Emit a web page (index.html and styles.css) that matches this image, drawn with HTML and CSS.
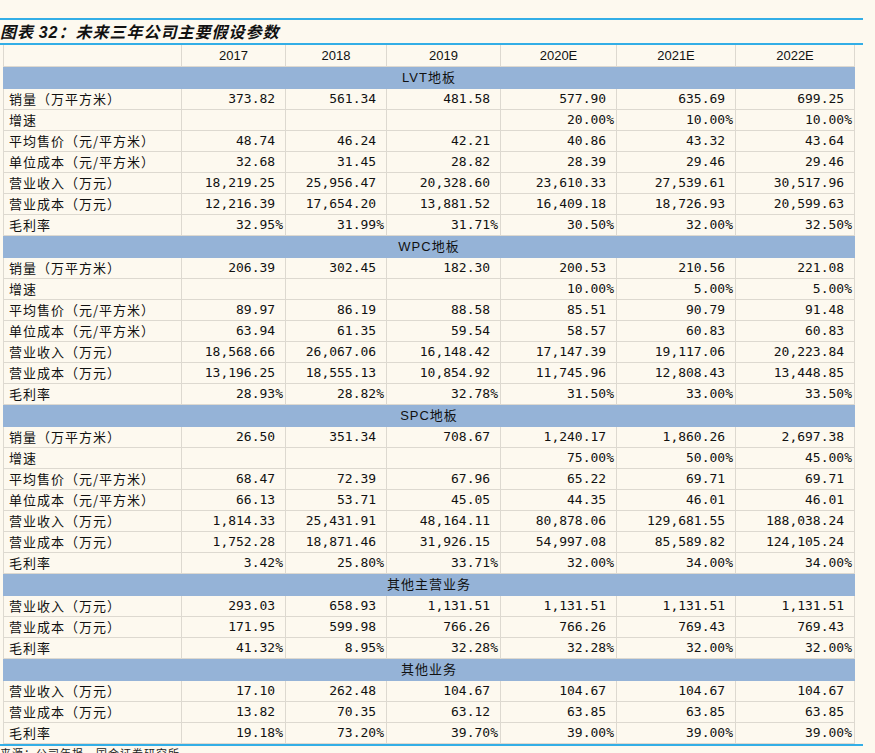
FILE: index.html
```html
<!DOCTYPE html>
<html lang="zh">
<head>
<meta charset="utf-8">
<title>图表 32</title>
<link rel="stylesheet" href="styles.css">
</head>
<body>
<div class="page">
  <div class="title-bar"><span class="title">图表 <span class="num">32</span>：未来三年公司主要假设参数</span></div>
  <table class="data">
    <colgroup>
      <col class="c0"><col class="c1"><col class="c2"><col class="c3"><col class="c4"><col class="c5"><col class="c6">
    </colgroup>
    <tr class="head"><td></td><td>2017</td><td>2018</td><td>2019</td><td>2020E</td><td>2021E</td><td>2022E</td></tr>

    <tr class="sec"><td colspan="7">LVT地板</td></tr>
    <tr><td class="l">销量（万平方米）</td><td class="n">373.82</td><td class="n">561.34</td><td class="n">481.58</td><td class="n">577.90</td><td class="n">635.69</td><td class="n">699.25</td></tr>
    <tr><td class="l">增速</td><td></td><td></td><td></td><td class="p">20.00%</td><td class="p">10.00%</td><td class="p">10.00%</td></tr>
    <tr><td class="l">平均售价（元/平方米）</td><td class="n">48.74</td><td class="n">46.24</td><td class="n">42.21</td><td class="n">40.86</td><td class="n">43.32</td><td class="n">43.64</td></tr>
    <tr><td class="l">单位成本（元/平方米）</td><td class="n">32.68</td><td class="n">31.45</td><td class="n">28.82</td><td class="n">28.39</td><td class="n">29.46</td><td class="n">29.46</td></tr>
    <tr><td class="l">营业收入（万元）</td><td class="n">18,219.25</td><td class="n">25,956.47</td><td class="n">20,328.60</td><td class="n">23,610.33</td><td class="n">27,539.61</td><td class="n">30,517.96</td></tr>
    <tr><td class="l">营业成本（万元）</td><td class="n">12,216.39</td><td class="n">17,654.20</td><td class="n">13,881.52</td><td class="n">16,409.18</td><td class="n">18,726.93</td><td class="n">20,599.63</td></tr>
    <tr><td class="l">毛利率</td><td class="p">32.95%</td><td class="p">31.99%</td><td class="p">31.71%</td><td class="p">30.50%</td><td class="p">32.00%</td><td class="p">32.50%</td></tr>

    <tr class="sec"><td colspan="7">WPC地板</td></tr>
    <tr><td class="l">销量（万平方米）</td><td class="n">206.39</td><td class="n">302.45</td><td class="n">182.30</td><td class="n">200.53</td><td class="n">210.56</td><td class="n">221.08</td></tr>
    <tr><td class="l">增速</td><td></td><td></td><td></td><td class="p">10.00%</td><td class="p">5.00%</td><td class="p">5.00%</td></tr>
    <tr><td class="l">平均售价（元/平方米）</td><td class="n">89.97</td><td class="n">86.19</td><td class="n">88.58</td><td class="n">85.51</td><td class="n">90.79</td><td class="n">91.48</td></tr>
    <tr><td class="l">单位成本（元/平方米）</td><td class="n">63.94</td><td class="n">61.35</td><td class="n">59.54</td><td class="n">58.57</td><td class="n">60.83</td><td class="n">60.83</td></tr>
    <tr><td class="l">营业收入（万元）</td><td class="n">18,568.66</td><td class="n">26,067.06</td><td class="n">16,148.42</td><td class="n">17,147.39</td><td class="n">19,117.06</td><td class="n">20,223.84</td></tr>
    <tr><td class="l">营业成本（万元）</td><td class="n">13,196.25</td><td class="n">18,555.13</td><td class="n">10,854.92</td><td class="n">11,745.96</td><td class="n">12,808.43</td><td class="n">13,448.85</td></tr>
    <tr><td class="l">毛利率</td><td class="p">28.93%</td><td class="p">28.82%</td><td class="p">32.78%</td><td class="p">31.50%</td><td class="p">33.00%</td><td class="p">33.50%</td></tr>

    <tr class="sec"><td colspan="7">SPC地板</td></tr>
    <tr><td class="l">销量（万平方米）</td><td class="n">26.50</td><td class="n">351.34</td><td class="n">708.67</td><td class="n">1,240.17</td><td class="n">1,860.26</td><td class="n">2,697.38</td></tr>
    <tr><td class="l">增速</td><td></td><td></td><td></td><td class="p">75.00%</td><td class="p">50.00%</td><td class="p">45.00%</td></tr>
    <tr><td class="l">平均售价（元/平方米）</td><td class="n">68.47</td><td class="n">72.39</td><td class="n">67.96</td><td class="n">65.22</td><td class="n">69.71</td><td class="n">69.71</td></tr>
    <tr><td class="l">单位成本（元/平方米）</td><td class="n">66.13</td><td class="n">53.71</td><td class="n">45.05</td><td class="n">44.35</td><td class="n">46.01</td><td class="n">46.01</td></tr>
    <tr><td class="l">营业收入（万元）</td><td class="n">1,814.33</td><td class="n">25,431.91</td><td class="n">48,164.11</td><td class="n">80,878.06</td><td class="n">129,681.55</td><td class="n">188,038.24</td></tr>
    <tr><td class="l">营业成本（万元）</td><td class="n">1,752.28</td><td class="n">18,871.46</td><td class="n">31,926.15</td><td class="n">54,997.08</td><td class="n">85,589.82</td><td class="n">124,105.24</td></tr>
    <tr><td class="l">毛利率</td><td class="p">3.42%</td><td class="p">25.80%</td><td class="p">33.71%</td><td class="p">32.00%</td><td class="p">34.00%</td><td class="p">34.00%</td></tr>

    <tr class="sec"><td colspan="7">其他主营业务</td></tr>
    <tr><td class="l">营业收入（万元）</td><td class="n">293.03</td><td class="n">658.93</td><td class="n">1,131.51</td><td class="n">1,131.51</td><td class="n">1,131.51</td><td class="n">1,131.51</td></tr>
    <tr><td class="l">营业成本（万元）</td><td class="n">171.95</td><td class="n">599.98</td><td class="n">766.26</td><td class="n">766.26</td><td class="n">769.43</td><td class="n">769.43</td></tr>
    <tr><td class="l">毛利率</td><td class="p">41.32%</td><td class="p">8.95%</td><td class="p">32.28%</td><td class="p">32.28%</td><td class="p">32.00%</td><td class="p">32.00%</td></tr>

    <tr class="sec"><td colspan="7">其他业务</td></tr>
    <tr><td class="l">营业收入（万元）</td><td class="n">17.10</td><td class="n">262.48</td><td class="n">104.67</td><td class="n">104.67</td><td class="n">104.67</td><td class="n">104.67</td></tr>
    <tr><td class="l">营业成本（万元）</td><td class="n">13.82</td><td class="n">70.35</td><td class="n">63.12</td><td class="n">63.85</td><td class="n">63.85</td><td class="n">63.85</td></tr>
    <tr><td class="l">毛利率</td><td class="p">19.18%</td><td class="p">73.20%</td><td class="p">39.70%</td><td class="p">39.00%</td><td class="p">39.00%</td><td class="p">39.00%</td></tr>
  </table>
  <div class="rule"></div>
  <div class="source">来源：公司年报，国金证券研究所</div>
</div>
</body>
</html>
```

FILE: styles.css
```css
html, body {
  margin: 0;
  padding: 0;
  background: #fdf9ef;
}
body {
  font-family: "Noto Sans CJK SC", sans-serif;
  color: #111;
}
.page {
  width: 863px;
  padding-top: 18px;
}
.title-bar {
  border-top: 2px solid #33aee6;
  border-bottom: 2px solid #33aee6;
  height: 23px;
  display: flex;
  align-items: center;
}
.title {
  font-family: "Noto Sans CJK SC", sans-serif;
  font-weight: 700;
  font-style: italic;
  font-size: 16px;
  letter-spacing: 1px;
  line-height: 23px;
  color: #111;
}
.title .num {
  font-family: "Liberation Sans", sans-serif;
}
.data {
  margin-left: 3px;
  border-collapse: collapse;
  table-layout: fixed;
  width: 851px;
}
.c0 { width: 178px; }
.c1 { width: 104px; }
.c2 { width: 101px; }
.c3 { width: 114px; }
.c4 { width: 116px; }
.c5 { width: 119px; }
.c6 { width: 119px; }
.data td {
  border: 1px solid #ddd9d0;
  padding: 0;
  height: 20px;
  white-space: nowrap;
  font-size: 13px;
  line-height: 20px;
}
.data tr.head td {
  height: 21px;
  text-align: center;
  font-family: "Liberation Sans", sans-serif;
  font-size: 13px;
  border-top: none;
}
.data tr.sec td {
  height: 21px;
  background: #95b3d7;
  border-color: #95b3d7;
  text-align: center;
  font-family: "Liberation Sans", "Noto Sans CJK SC", sans-serif;
  font-size: 13px;
  letter-spacing: 1px;
}
.data td.l {
  padding-left: 5px;
  font-family: "Noto Sans CJK SC", sans-serif;
  font-size: 13px;
  letter-spacing: 1px;
}
.data td.n,
.data td.p {
  text-align: right;
  font-family: "DejaVu Sans Mono", monospace;
  font-size: 13px;
}
.data td.n {
  padding-right: calc(1ch + 2px);
}
.data td.p {
  padding-right: 2px;
}
.rule {
  border-top: 2px solid #33aee6;
}
.source {
  font-size: 11px;
  line-height: 14px;
  letter-spacing: 1px;
  padding-left: 0;
  color: #222;
}
```
